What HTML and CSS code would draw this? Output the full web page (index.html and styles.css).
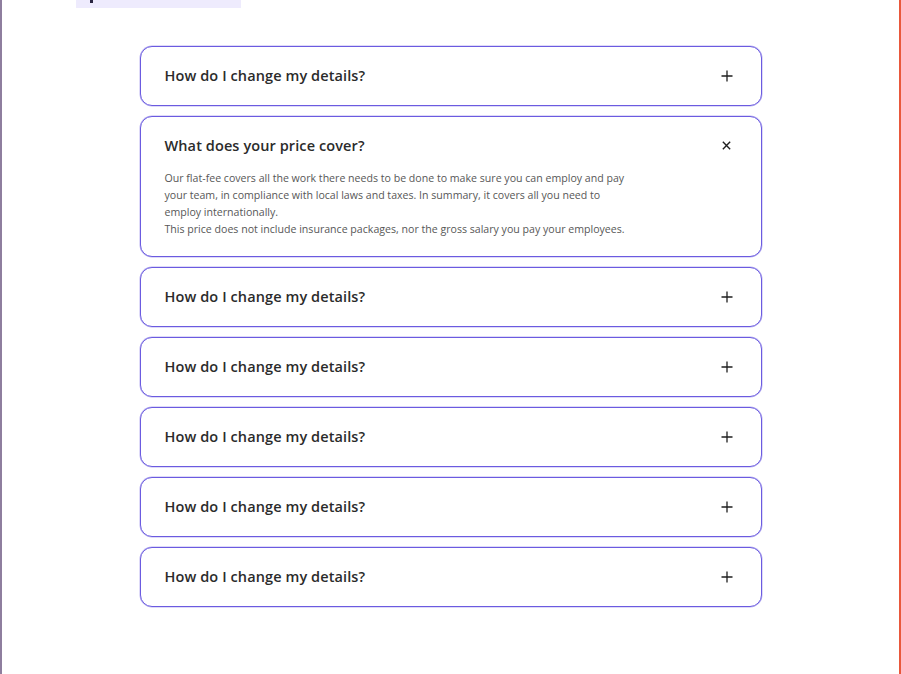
FILE: index.html
```html
<!DOCTYPE html>
<html lang="en">
<head>
<meta charset="utf-8">
<title>FAQ</title>
<link rel="stylesheet" href="styles.css">
</head>
<body>
<div class="page">
  <div class="top-strip"><span class="top-mark"></span></div>
  <section class="faq">
    <div class="card">
      <div class="card-head">
        <span class="q">How do I change my details?</span>
        <svg class="icon" viewBox="0 0 12 12" width="12" height="12"><path d="M6 0.5V11.5M0.5 6H11.5" stroke="#1f1f1f" stroke-width="1.3" fill="none"/></svg>
      </div>
    </div>
    <div class="card open">
      <div class="card-head">
        <span class="q">What does your price cover?</span>
        <svg class="icon" viewBox="0 0 12 12" width="12" height="12"><path d="M2 2L10 10M10 2L2 10" stroke="#1f1f1f" stroke-width="1.5" fill="none"/></svg>
      </div>
      <p class="answer">Our flat-fee covers all the work there needs to be done to make sure you can employ and pay<br>your team, in compliance with local laws and taxes. In summary, it covers all you need to<br>employ internationally.<br>This price does not include insurance packages, nor the gross salary you pay your employees.</p>
    </div>
    <div class="card">
      <div class="card-head">
        <span class="q">How do I change my details?</span>
        <svg class="icon" viewBox="0 0 12 12" width="12" height="12"><path d="M6 0.5V11.5M0.5 6H11.5" stroke="#1f1f1f" stroke-width="1.3" fill="none"/></svg>
      </div>
    </div>
    <div class="card">
      <div class="card-head">
        <span class="q">How do I change my details?</span>
        <svg class="icon" viewBox="0 0 12 12" width="12" height="12"><path d="M6 0.5V11.5M0.5 6H11.5" stroke="#1f1f1f" stroke-width="1.3" fill="none"/></svg>
      </div>
    </div>
    <div class="card">
      <div class="card-head">
        <span class="q">How do I change my details?</span>
        <svg class="icon" viewBox="0 0 12 12" width="12" height="12"><path d="M6 0.5V11.5M0.5 6H11.5" stroke="#1f1f1f" stroke-width="1.3" fill="none"/></svg>
      </div>
    </div>
    <div class="card">
      <div class="card-head">
        <span class="q">How do I change my details?</span>
        <svg class="icon" viewBox="0 0 12 12" width="12" height="12"><path d="M6 0.5V11.5M0.5 6H11.5" stroke="#1f1f1f" stroke-width="1.3" fill="none"/></svg>
      </div>
    </div>
    <div class="card">
      <div class="card-head">
        <span class="q">How do I change my details?</span>
        <svg class="icon" viewBox="0 0 12 12" width="12" height="12"><path d="M6 0.5V11.5M0.5 6H11.5" stroke="#1f1f1f" stroke-width="1.3" fill="none"/></svg>
      </div>
    </div>
  </section>
</div>
</body>
</html>
```

FILE: styles.css
```css
* { box-sizing: border-box; }
html, body { margin: 0; padding: 0; background: #ffffff; }
body {
  font-family: "Open Sans", "Liberation Sans", sans-serif;
  color: #262626;
}
.page {
  min-height: 674px;
  border-left: 2px solid #8e7e9e;
  border-right: 2px solid #e9583b;
  overflow: hidden;
}
.top-strip {
  margin-left: 74px;
  width: 165px;
  height: 8px;
  background: #eeebfd;
  padding-left: 14px;
}
.top-mark {
  display: block;
  width: 3px;
  height: 3px;
  background: #2a2540;
}
.faq {
  width: 622px;
  margin: 38px 0 0 138px;
  display: flex;
  flex-direction: column;
  gap: 10px;
}
.card {
  border: 1.5px solid #6b5be0;
  border-radius: 12px;
  background: #fff;
  box-shadow: 0 0 0 0.5px rgba(107, 91, 224, 0.45);
}
.card-head {
  display: flex;
  align-items: center;
  justify-content: space-between;
  padding: 18px 28px 19px 23.5px;
}
.q {
  font-size: 14.5px;
  line-height: 21px;
  font-weight: 600;
  color: #2b2b2b;
  letter-spacing: 0.1px;
}
.icon {
  width: 12px;
  height: 12px;
  display: block;
}
.open .card-head { padding-top: 18px; padding-bottom: 14px; }
.open .icon { width: 11px; height: 11px; margin-right: 1px; }
.answer {
  margin: 0;
  padding: 0 24px 18px 23.5px;
  font-size: 10.6px;
  line-height: 17px;
  color: #575757;
  font-weight: 400;
}
```
